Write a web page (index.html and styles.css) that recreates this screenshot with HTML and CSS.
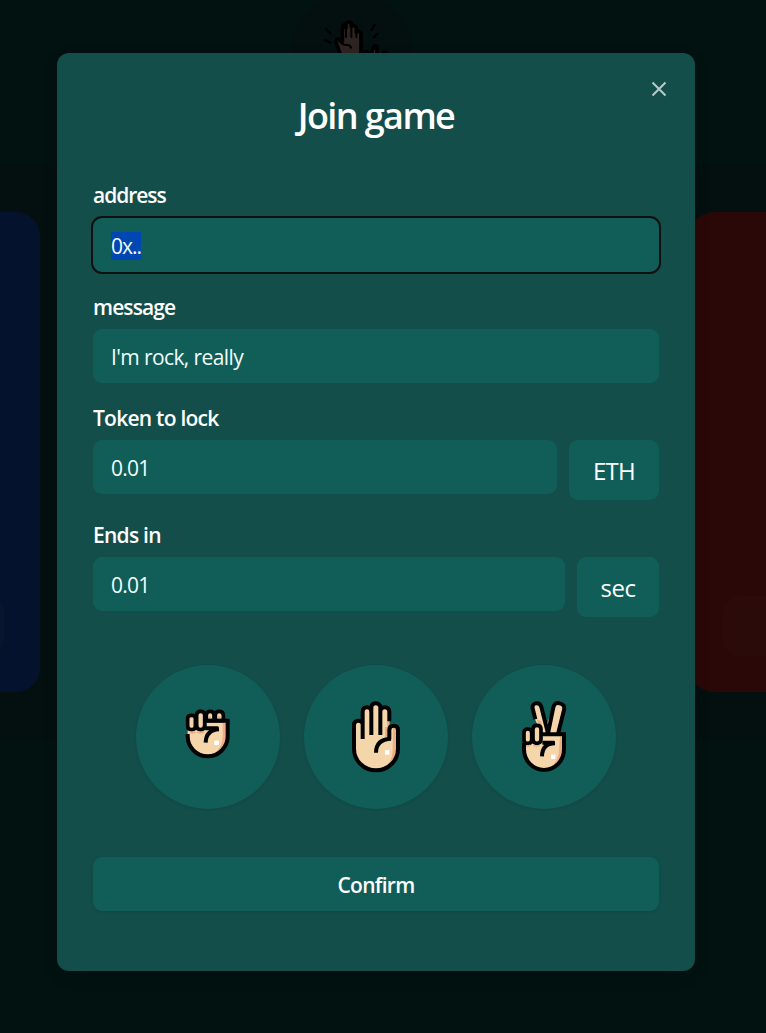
FILE: index.html
```html
<!DOCTYPE html>
<html lang="en">
<head>
<meta charset="utf-8">
<title>Join game</title>
<link rel="stylesheet" href="styles.css">
</head>
<body>
<div class="scene" aria-hidden="true">
  <div class="band"></div>
  <div class="badge">
    <svg class="clap" viewBox="0 0 450 180">
      <g fill="#2d2321" stroke="#000" stroke-width="11" stroke-linecap="round" stroke-linejoin="round">
        <path d="M190 190L168 126Q166 114 177 119L187 128V84Q187 75 192 75Q198 75 198 84V73Q198 66 206 66Q214 66 214 73V80Q216 75 223 77Q229 79 229 86V97Q232 92 238 94Q243 96 243 103V190Z"/>
        <path d="M198 84V111M214 78V111M229 88V111M179 123Q190 137 199 135Q211 134 213 143" fill="none" stroke-width="6"/>
        <path d="M138 87L152 100M135 121L151 128M284 74L275 90M293 101L281 112" stroke-width="7"/>
        <path d="M240 185V162L262 155L272 166L281 141Q285 134 291 140V190ZM310 159Q320 153 325 165"/>
      </g>
    </svg>
  </div>
  <div class="player player-blue"><span class="player-button"></span></div>
  <div class="player player-red"><span class="player-button"></span></div>
</div>
<main class="modal" role="dialog" aria-label="Join game">
  <button class="close" type="button" aria-label="Close">
    <svg viewBox="0 0 18 18"><path d="M2.5 2.5L15.5 15.5M15.5 2.5L2.5 15.5" stroke="#b8cac9" stroke-width="2" fill="none"/></svg>
  </button>
  <h1 class="title">Join game</h1>
  <form class="form">
    <div class="field">
      <div class="label t-address">address</div>
      <div class="input focused"><span class="selected">0x..</span></div>
    </div>
    <div class="field">
      <div class="label t-message">message</div>
      <div class="input"><span class="t-rock">I'm rock, really</span></div>
    </div>
    <div class="field">
      <div class="label t-token">Token to lock</div>
      <div class="row"><div class="input"><span class="t-number">0.01</span></div><div class="unit unit-eth">ETH</div></div>
    </div>
    <div class="field">
      <div class="label t-ends">Ends in</div>
      <div class="row"><div class="input"><span class="t-number">0.01</span></div><div class="unit unit-sec">sec</div></div>
    </div>
    <div class="choices">
      <button class="choice" type="button" aria-label="Rock">
        <svg class="hand hand-rock" viewBox="0 0 240 240">
          <path d="M53 105V121A60 62 0 0 0 173 121V77H110V105Z" fill="#f4d6aa"/>
          <path d="M158 83H168V122Q168 157 138 171Q158 153 158 124Z" fill="#efad86"/>
          <g fill="#f4d6aa" stroke="#000" stroke-width="11" stroke-linejoin="round">
            <path d="M109 77V61Q109 49 120 49Q132 49 132 61V77ZM136 77V61Q136 49 147 49Q160 49 160 61V77Z"/>
            <path d="M53 94V70Q53 61 65 61Q76 61 76 70V94Q76 104 65 104Q53 104 53 94ZM80 91V60Q80 49 92 49Q104 49 104 60V91Q104 104 92 104Q80 104 80 91Z"/>
          </g>
          <path d="M115 66Q119 61 123 66V69H115ZM142 66Q147 61 152 66V69H142Z" fill="#efad86"/>
          <path d="M53 117V124A60 60 0 0 0 173 124V77H110M106 100H145M147 103Q108 105 107 143" fill="none" stroke="#000" stroke-width="12"/>
          <path d="M60 112Q67 116 76 111M81 111Q91 116 103 110" fill="none" stroke="#efad86" stroke-width="5"/>
          <path d="M133 137H147V150H133Z" fill="#fff"/>
        </svg>
      </button>
      <button class="choice" type="button" aria-label="Paper">
        <svg class="hand hand-tall" viewBox="0 0 240 270">
          <path d="M54 106Q54 92 67 92Q80 92 80 102V66Q80 52 93 52Q106 52 106 65V54Q106 40 119 40Q133 40 133 54V66Q133 52 146 52Q160 52 160 66V117Q160 107 173 107Q186 107 186 120V176A66 65 0 0 1 54 176Z" fill="#f4d6aa"/>
          <path d="M153 94H160V144H147V111H153ZM171 114Q181 110 181 123V176Q181 207 151 231Q170 209 170 177Z" fill="#efad86"/>
          <path d="M80 147V66Q80 52 93 52Q106 52 106 65V135V54Q106 40 119 40Q133 40 133 54V135V66Q133 52 146 52Q160 52 160 66V94M80 102Q79 92 67 92Q54 92 54 106V176A66 65 0 0 0 186 176V120Q186 107 173 107Q160 107 160 120V148M165 146Q120 148 120 188" fill="none" stroke="#000" stroke-width="12"/>
          <path d="M147 180H160V194H147Z" fill="#fff"/>
        </svg>
      </button>
      <button class="choice" type="button" aria-label="Scissors">
        <svg class="hand hand-tall" viewBox="0 0 240 270">
          <path d="M93 88L86 58Q82 42 95 39Q108 36 112 51L127 106L150 49Q154 36 167 40Q184 44 180 58L162 132H180V178A60 62 0 0 1 60 178V159H111V128Z" fill="#f4d6aa"/>
          <path d="M97 88L105 104L118 126L112 94ZM168 140H175V181Q174 211 144 229Q165 207 165 180Z" fill="#efad86"/>
          <path d="M94 88L87 59Q82 43 95 40Q108 37 112 51L132 130L148 52Q152 36 167 40Q184 44 180 60L162 132M113 133H180V178A60 62 0 0 1 60 178V159M115 158H151M153 160Q115 160 114 199" fill="none" stroke="#000" stroke-width="12"/>
          <path d="M60 149V128Q60 117 71 117Q83 117 83 128V149Q83 160 71 160Q60 160 60 149ZM87 147V118Q87 106 99 106Q111 106 111 118V147Q111 160 99 160Q87 160 87 147Z" fill="#f4d6aa" stroke="#000" stroke-width="11"/>
          <path d="M67 167Q72 170 79 166M88 166Q98 170 108 166" fill="none" stroke="#efad86" stroke-width="5"/>
          <path d="M141 194H154V207H141Z" fill="#fff"/>
        </svg>
      </button>
    </div>
    <button class="confirm" type="button"><span>Confirm</span></button>
  </form>
</main>
</body>
</html>
```
FILE: styles.css
```css
* { box-sizing: border-box; }
body {
  margin: 0;
  width: 766px;
  height: 1033px;
  overflow: hidden;
  display: flex;
  padding: 53px 0 0 57px;
  background: #021210;
  color: #fff;
  font-family: "Segoe UI", "Open Sans", "Noto Sans", sans-serif;
  font-weight: 450;
}
button { border: 0; padding: 0; color: inherit; font: inherit; background: none; }
/* Dimmed game board behind the dialog */
.scene { position: absolute; inset: 0; overflow: hidden; }
.band { position: absolute; top: 165px; left: 0; right: 0; height: 575px; background: #04100f; }
.badge { position: absolute; top: -6px; left: 292px; width: 120px; height: 120px; border-radius: 50%; background: #03100f; }
.clap { position: absolute; left: -12px; top: 6px; width: 150px; height: 60px; }
.player { position: absolute; top: 212px; width: 300px; height: 480px; border-radius: 24px; }
.player-blue { left: -260px; background: #05122d; }
.player-red { left: 690px; background: #2b0808; }
.player-button { position: absolute; top: 384px; width: 234px; height: 60px; border-radius: 16px; }
.player-blue .player-button { left: 30px; background: #07152d; }
.player-red .player-button { left: 33px; background: #2b0b0a; }

.modal {
  position: relative;
  width: 638px;
  height: 918px;
  padding: 36px;
  border-radius: 12px;
  background: #134e4a;
  box-shadow: 0 6px 16px rgba(0, 0, 0, .1);
}
.close { position: absolute; top: 27px; right: 27px; width: 18px; height: 18px; }
.close svg { display: block; width: 18px; height: 18px; }
.title {
  margin: 0 0 38px;
  height: 54px;
  line-height: 54px;
  font-size: 36px;
  font-weight: 620;
  letter-spacing: -1.6px;
  text-align: center;
}
.form { display: flex; flex-direction: column; }
.field { margin-bottom: 21px; }
.label { height: 27px; line-height: 30px; margin-bottom: 9px; font-size: 21px; font-weight: 630; white-space: nowrap; }
.field:first-child .label { height: 28px; }
.input {
  display: flex;
  align-items: center;
  flex: 1;
  height: 54px;
  padding: 2px 18px 0;
  border-radius: 9px;
  background: #115e59;
  color: #f0fdfa;
  font-size: 21px;
}
.focused { outline: 2px solid #101010; outline-offset: -.5px; }
.selected { height: 28px; line-height: 29px; background: #0047b3; width: 30px; letter-spacing: -1px; white-space: nowrap; }
.row { display: flex; align-items: flex-start; gap: 12px; }
.unit { height: 60px; padding-top: 3px; border-radius: 9px; background: #115e59; font-size: 24px; line-height: 56px; text-align: center; }
.unit-eth { width: 90px; letter-spacing: -.8px; }
.unit-sec { width: 82px; letter-spacing: -.5px; }
.label { position: relative; top: -1px; }
.t-address { letter-spacing: -1.05px; }
.t-message { letter-spacing: -.9px; }
.t-token { letter-spacing: -.75px; }
.t-ends { letter-spacing: -.75px; }
.t-rock { letter-spacing: -.6px; }
.t-number { letter-spacing: -.8px; }
.choices { display: flex; justify-content: center; gap: 24px; margin-top: 27px; }
.choice {
  display: flex;
  justify-content: center;
  width: 144px;
  height: 144px;
  padding-top: 30px;
  border-radius: 50%;
  background: #115e59;
  box-shadow: 0 1px 3px rgba(0, 0, 0, .12);
}
.hand { display: block; width: 80px; height: 80px; }
.hand-rock { margin-left: 4px; }
.hand-tall { height: 90px; margin-top: -5px; }
.confirm {
  height: 54px;
  margin-top: 48px;
  padding-top: 2px;
  border-radius: 9px;
  background: #115e59;
  box-shadow: 0 1px 3px rgba(0, 0, 0, .12);
  font-size: 21px;
  font-weight: 630;
  letter-spacing: -.7px;
}
```
